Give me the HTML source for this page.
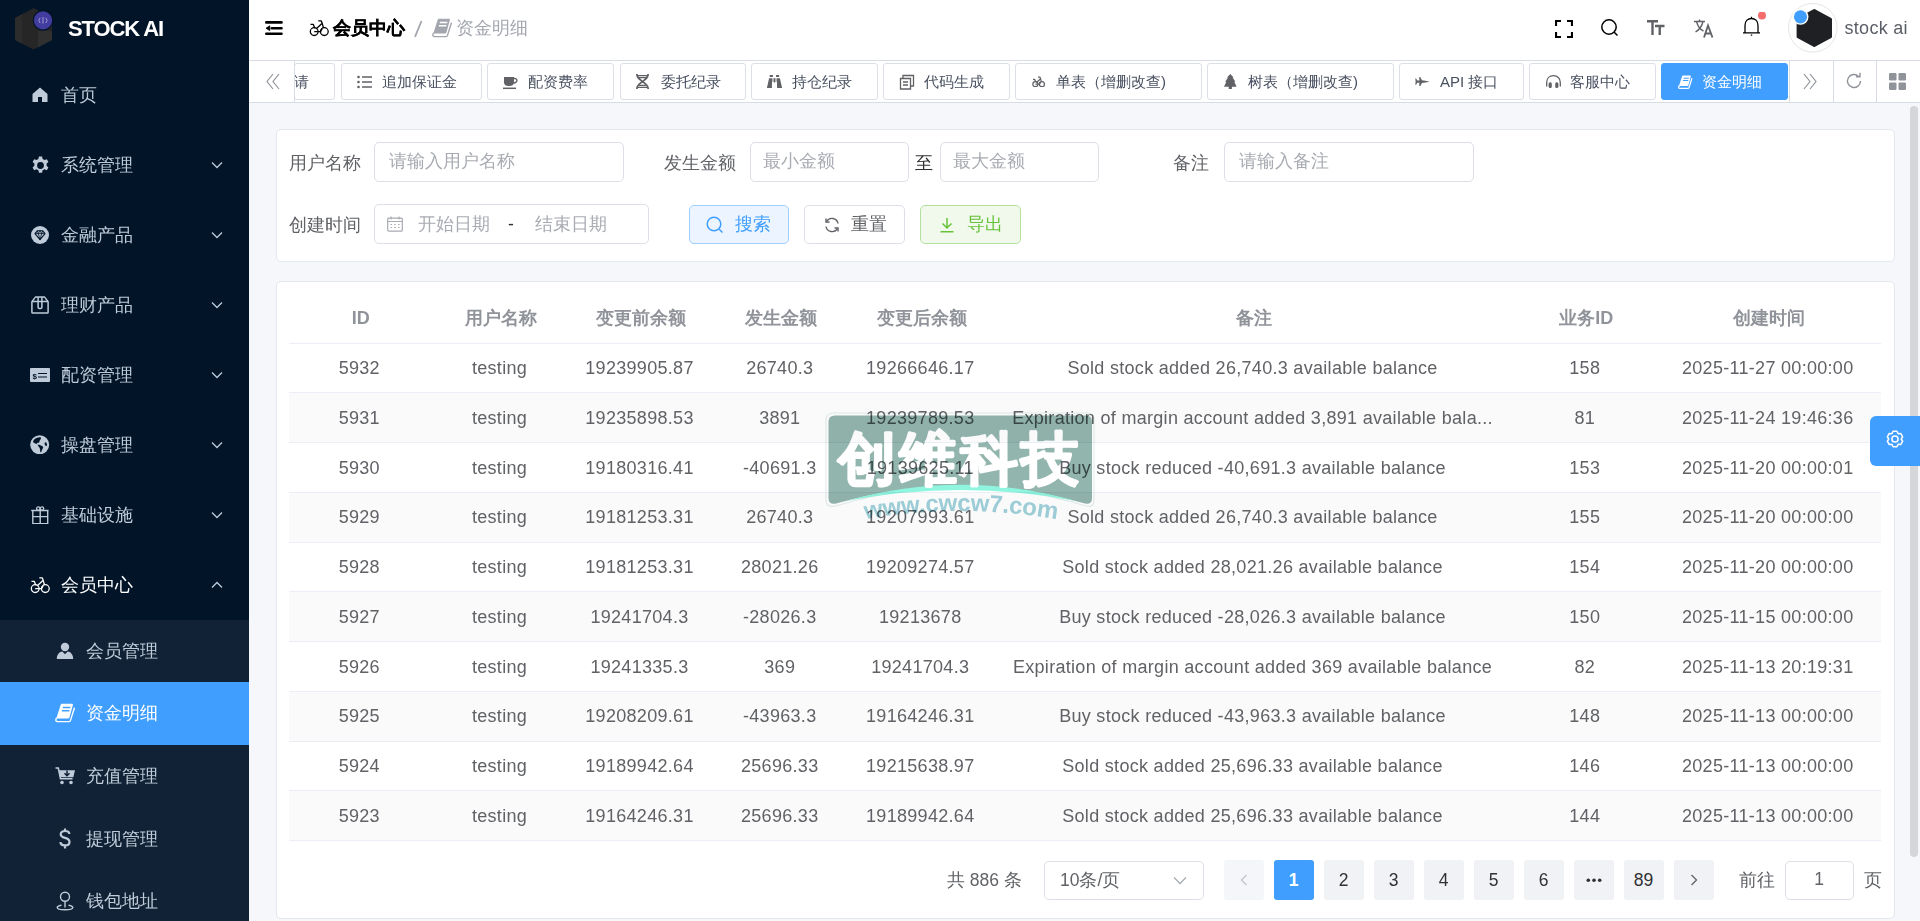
<!DOCTYPE html>
<html><head><meta charset="utf-8">
<style>
*{box-sizing:border-box;margin:0;padding:0}
html,body{width:1920px;height:921px;overflow:hidden;background:#f5f7fa;font-family:"Liberation Sans",sans-serif;font-size:17.5px;color:#606266}
.abs{position:absolute}
#sb{position:absolute;left:0;top:0;width:249px;height:921px;background:#011428;overflow:hidden}
.mi{position:absolute;left:0;width:249px;height:70px;color:#bfcbd9;font-size:17.5px}
.mi .t{position:absolute;left:61px;top:0;line-height:70px;white-space:nowrap}
.mi svg.ic{position:absolute;left:31px;top:26px;width:18px;height:18px}
.mi svg.ch{position:absolute;left:211px;top:31px;width:12px;height:8px}
.si{position:absolute;left:0;width:249px;height:62.5px;color:#bfcbd9}
.si .t{position:absolute;left:86px;top:0;line-height:62.5px;white-space:nowrap}
.si svg.ic{position:absolute;left:56px;top:22px;width:18px;height:18px}
#nav{position:absolute;left:249px;top:0;width:1671px;height:60px;background:#fff}
#tags{position:absolute;left:249px;top:60px;width:1671px;height:43px;background:#fff;border-top:1px solid #d8dce5;border-bottom:1.5px solid #d8dce5}
.tag{position:absolute;top:2px;height:37px;border:1px solid #dcdfe6;border-radius:3px;background:#fff;color:#495060;font-size:15px;line-height:35px;white-space:nowrap}
.tag svg{position:absolute;top:10px;width:16px;height:16px}
.tag .tt{position:absolute;top:0}
.card{position:absolute;background:#fff;border:1px solid #e4e7ed;border-radius:5px}
.lbl{position:absolute;color:#606266;font-size:17.5px;line-height:20px;white-space:nowrap}
.inp{position:absolute;height:39.5px;border:1px solid #dcdfe6;border-radius:5px;background:#fff;color:#a8abb2;font-size:17.5px;line-height:37px;white-space:nowrap}
.btn{position:absolute;top:204.5px;height:39.5px;border:1px solid #dcdfe6;border-radius:5px;font-size:17.5px;line-height:37px;white-space:nowrap}
.th{position:absolute;top:293px;height:50px;line-height:50px;text-align:center;font-weight:bold;color:#909399;white-space:nowrap;font-size:18px}
.row{position:absolute;left:289px;width:1592px;height:49.75px;border-bottom:1px solid #ebeef5}
.row.s{background:#fafafa}
.td{position:absolute;top:0.7px;height:49px;line-height:49px;text-align:center;white-space:nowrap;color:#606266;letter-spacing:0.3px;font-size:18px}
.pg{position:absolute;top:859.5px;width:40px;height:40px;border-radius:3px;background:#f0f2f5;color:#303133;text-align:center;line-height:40px;font-size:17.5px;font-weight:normal}
</style></head><body>

<!-- SIDEBAR -->
<div id="sb">
  <svg class="abs" style="left:14px;top:7px" width="40" height="44" viewBox="0 0 40 44">
    <polygon points="19.5,1 38,11 38,33 19.5,42.5 1,33 1,11" fill="#262626"/>
    <polygon points="1,11 8,7.2 8,36.7 1,33" fill="#2c2c2c"/>
    <polygon points="24,24 38,24 38,33 24,40.5" fill="#303030"/>
    <circle cx="29" cy="13.4" r="10.3" fill="#011428"/>
    <circle cx="29" cy="13.4" r="9.1" fill="#423c9f"/>
    <path d="M26.2 10.8 L24.8 13.4 L26.2 16 M31.8 10.8 L33.2 13.4 L31.8 16 M29 10 V16.6" stroke="#a9a5dc" stroke-width="0.9" fill="none"/>
  </svg>
  <div class="abs" style="left:68px;top:16px;color:#fff;font-weight:bold;font-size:22px;line-height:26px;letter-spacing:-1.1px">STOCK AI</div>

  <div class="mi" style="top:60px"><svg class="ic" viewBox="0 0 18 18"><path d="M9 1.5 L1.5 8 V16 H7 V11 H11 V16 H16.5 V8 Z" fill="#bfcbd9"/></svg><span class="t">首页</span></div>
  <div class="mi" style="top:130px"><svg class="ic" viewBox="0 0 18 18" style="left:30.5px;top:25.5px;width:19px;height:19px"><path d="M7.5 0.5h3l0.5 2.3 1.8 1 2.2-0.8 1.5 2.6-1.7 1.6v2l1.7 1.6-1.5 2.6-2.2-0.8-1.8 1-0.5 2.3h-3l-0.5-2.3-1.8-1-2.2 0.8-1.5-2.6 1.7-1.6v-2l-1.7-1.6 1.5-2.6 2.2 0.8 1.8-1z" fill="#bfcbd9"/><circle cx="9" cy="9" r="3.2" fill="#011428"/></svg><span class="t">系统管理</span><svg class="ch" viewBox="0 0 12 8"><path d="M1 1.5 L6 6.5 L11 1.5" stroke="#bfcbd9" stroke-width="1.3" fill="none"/></svg></div>
  <div class="mi" style="top:200px"><svg class="ic" viewBox="0 0 18 18"><circle cx="9" cy="9" r="9" fill="#bfcbd9"/><path d="M6.3 4.8 H11.7 L14 7.6 L9 13.6 L4 7.6 Z" stroke="#011428" stroke-width="1.1" fill="none" stroke-linejoin="round"/><path d="M4 7.6 H14 M7.3 7.6 L9 13.6 L10.7 7.6 M6.3 4.8 L7.3 7.6 L9 4.8 L10.7 7.6 L11.7 4.8" stroke="#011428" stroke-width="0.8" fill="none"/></svg><span class="t">金融产品</span><svg class="ch" viewBox="0 0 12 8"><path d="M1 1.5 L6 6.5 L11 1.5" stroke="#bfcbd9" stroke-width="1.3" fill="none"/></svg></div>
  <div class="mi" style="top:270px"><svg class="ic" viewBox="0 0 18 18"><path d="M0.9 5.6 L4.6 0.9 H13.4 L17.1 5.6 V16.3 Q17.1 17.1 16.3 17.1 H1.7 Q0.9 17.1 0.9 16.3 Z M0.9 5.6 H17.1" stroke="#bfcbd9" stroke-width="1.5" fill="none" stroke-linejoin="round"/><path d="M7.1 1 V11.2 Q7.1 12.4 8.3 12.4 H9.7 Q10.9 12.4 10.9 11.2 V1" stroke="#bfcbd9" stroke-width="1.5" fill="none"/></svg><span class="t">理财产品</span><svg class="ch" viewBox="0 0 12 8"><path d="M1 1.5 L6 6.5 L11 1.5" stroke="#bfcbd9" stroke-width="1.3" fill="none"/></svg></div>
  <div class="mi" style="top:340px"><svg class="ic" viewBox="0 0 20 18" style="width:20px;left:30px"><rect x="0" y="2" width="20" height="14" rx="1" fill="#bfcbd9"/><text x="2.5" y="12.5" font-size="8" font-weight="bold" fill="#011428" font-family="Liberation Sans">$</text><path d="M8 7.5h9M8 11h9" stroke="#011428" stroke-width="1.2"/></svg><span class="t">配资管理</span><svg class="ch" viewBox="0 0 12 8"><path d="M1 1.5 L6 6.5 L11 1.5" stroke="#bfcbd9" stroke-width="1.3" fill="none"/></svg></div>
  <div class="mi" style="top:410px"><svg style="position:absolute;left:30.3px;top:25px" width="19.4" height="19.4" viewBox="0 0 19.4 19.4"><circle cx="9.7" cy="9.8" r="9.5" fill="#bfcbd9"/><path d="M3 7 C3.5 5 5 3.5 7 2.8 C8.5 2.3 10 2 10.8 2.4 C11.3 3.5 10.6 4.5 9.8 5.3 C9.3 6.5 9.6 7.8 8.5 7.8 C7.5 7.5 6.5 8.2 6.8 9 C5.5 8.8 4.2 8 3 7 Z" fill="#011428"/><path d="M7.6 9.6 C9 10 10.5 10.3 12 11 C13.2 11.5 13.5 12.6 12.8 13.5 C12 14.5 11.8 16 11.2 17.3 C10.6 17.8 10.2 17 10.2 16 C10.3 14.5 9.8 13 9 12 C8.4 11.2 7.8 10.5 7.6 9.6 Z" fill="#011428"/><ellipse cx="15.8" cy="9.2" rx="1.1" ry="1.9" transform="rotate(-20 15.8 9.2)" fill="#011428"/></svg><span class="t">操盘管理</span><svg class="ch" viewBox="0 0 12 8"><path d="M1 1.5 L6 6.5 L11 1.5" stroke="#bfcbd9" stroke-width="1.3" fill="none"/></svg></div>
  <div class="mi" style="top:480px"><svg style="position:absolute;left:31px;top:26px" width="18" height="18" viewBox="0 0 18 18"><path d="M0.2 4.5 H17.6 M1.8 4.5 V17.6 H16.7 V4.5 M9.2 4.5 V17.6 M1.8 10.6 H16.7" stroke="#bfcbd9" stroke-width="1.4" fill="none"/><circle cx="7.3" cy="2.6" r="1.7" stroke="#bfcbd9" stroke-width="1.3" fill="none"/><circle cx="11" cy="2.6" r="1.7" stroke="#bfcbd9" stroke-width="1.3" fill="none"/></svg><span class="t">基础设施</span><svg class="ch" viewBox="0 0 12 8"><path d="M1 1.5 L6 6.5 L11 1.5" stroke="#bfcbd9" stroke-width="1.3" fill="none"/></svg></div>
  <div class="mi" style="top:550px;color:#fff"><svg style="position:absolute;left:30px;top:26px" width="20" height="18" viewBox="0 0 20 18"><circle cx="5.2" cy="12.6" r="3.9" stroke="#fff" stroke-width="1.3" fill="none"/><circle cx="15.3" cy="12.6" r="3.9" stroke="#fff" stroke-width="1.3" fill="none"/><path d="M1.5 5.3 H4.2 L5.8 9.2 M7 10 L13.2 4.3 M9.3 1.9 H12.3 L13.2 4.3 L14.5 9 M5.2 12.6 H11.5 L13.2 9.6" stroke="#fff" stroke-width="1.3" fill="none" stroke-linejoin="round"/></svg><span class="t">会员中心</span><svg class="ch" viewBox="0 0 12 8"><path d="M1 6.5 L6 1.5 L11 6.5" stroke="#bfcbd9" stroke-width="1.3" fill="none"/></svg></div>

  <div class="abs" style="left:0;top:620px;width:249px;height:301px;background:#112236"></div>
  <div class="si" style="top:620px"><svg style="position:absolute;left:56px;top:22px" width="18" height="18" viewBox="0 0 18 18"><circle cx="9" cy="5" r="4.2" fill="#bfcbd9"/><path d="M0.8 17 C0.8 12 4 9.8 6.3 9.6 L9 12.3 L11.7 9.6 C14 9.8 17.2 12 17.2 17 Z" fill="#bfcbd9"/></svg><span class="t">会员管理</span></div>
  <div class="si" style="top:682px;height:63px;background:#409eff;color:#fff"><svg style="position:absolute;left:55px;top:21px" width="21" height="20" viewBox="0 0 21 20"><path d="M7 0.8 H17 Q18.2 0.8 17.9 2 L14.5 14.3 Q14.2 15.5 13 15.5 H1.3 L5.6 2 Q6 0.8 7 0.8 Z" fill="#fff"/><path d="M1.3 15.3 Q0 18.6 2.6 18.6 H14.2 Q15.1 18.6 15.4 17.6 L19.3 5.2" stroke="#fff" stroke-width="1.4" fill="none" stroke-linecap="round"/><path d="M7.8 4.5 H15.3 M6.9 7.7 H14.4" stroke="#409eff" stroke-width="1.5"/></svg><span class="t">资金明细</span></div>
  <div class="si" style="top:745px"><svg style="position:absolute;left:55px;top:22px" width="21" height="18" viewBox="0 0 21 18"><path d="M0.5 1 H3.3 L5.5 11.8 H17.5" stroke="#bfcbd9" stroke-width="1.6" fill="none"/><path d="M4 3.2 H20 L18.3 10.2 H5.4 Z" fill="#bfcbd9"/><circle cx="7" cy="15.5" r="1.8" fill="#bfcbd9"/><circle cx="16" cy="15.5" r="1.8" fill="#bfcbd9"/><path d="M12 3.5 V8.5 M9.5 6.2 L12 8.7 L14.5 6.2" stroke="#112236" stroke-width="1.5" fill="none"/></svg><span class="t">充值管理</span></div>
  <div class="si" style="top:807.5px"><svg style="position:absolute;left:59px;top:20px" width="12" height="21" viewBox="0 0 12 21"><path d="M10.3 6 C10.3 3.8 8.5 3 6 3 C3.3 3 1.7 4.2 1.7 6.2 C1.7 8.5 3.8 9.3 6 9.9 C8.4 10.5 10.5 11.3 10.5 13.9 C10.5 16.3 8.5 17.3 6 17.3 C3.4 17.3 1.5 16.2 1.5 13.9 M6 0.5 V3 M6 17.3 V20.5" stroke="#bfcbd9" stroke-width="2.2" fill="none"/></svg><span class="t">提现管理</span></div>
  <div class="si" style="top:870px"><svg style="position:absolute;left:56px;top:21px" width="18" height="20" viewBox="0 0 18 20"><circle cx="9" cy="5.8" r="4.5" stroke="#bfcbd9" stroke-width="1.4" fill="none"/><path d="M9 10.3 V16.5" stroke="#bfcbd9" stroke-width="1.4"/><path d="M5.5 14.3 C2.5 14.8 1.2 15.7 1.2 16.6 C1.2 18 4.7 18.8 9 18.8 C13.3 18.8 16.8 18 16.8 16.6 C16.8 15.7 15.5 14.8 12.5 14.3" stroke="#bfcbd9" stroke-width="1.4" fill="none"/></svg><span class="t">钱包地址</span></div>
</div>

<!-- NAVBAR -->
<div id="nav">
  <svg class="abs" style="left:16px;top:20px" width="18" height="16" viewBox="0 0 18 16"><path d="M1.3 2.4 H16.5 M6.8 8.2 H16.5 M1.3 13.7 H16.5" stroke="#000" stroke-width="2.6" stroke-linecap="round"/><path d="M4.8 5.8 V10.6 L1 8.2 Z" fill="#000" stroke="#000" stroke-width="0.8" stroke-linejoin="round"/></svg>
  <svg class="abs" style="left:60px;top:19px" width="20" height="18" viewBox="0 0 20 18"><circle cx="5.2" cy="12.6" r="3.9" stroke="#000" stroke-width="1.3" fill="none"/><circle cx="15.3" cy="12.6" r="3.9" stroke="#000" stroke-width="1.3" fill="none"/><path d="M1.5 5.3 H4.2 L5.8 9.2 M7 10 L13.2 4.3 M9.3 1.9 H12.3 L13.2 4.3 L14.5 9 M5.2 12.6 H11.5 L13.2 9.6" stroke="#000" stroke-width="1.3" fill="none" stroke-linejoin="round"/></svg>
  <div class="abs" style="left:83.5px;top:18px;font-weight:bold;color:#000;font-size:17.5px;line-height:20px;-webkit-text-stroke:0.25px #000">会员中心</div>
  <svg class="abs" style="left:163px;top:20px" width="12" height="18" viewBox="0 0 12 18"><path d="M9.5 1 L3 16.8" stroke="#a3a6ae" stroke-width="1.8"/></svg>
  <svg class="abs" style="left:183px;top:18px" width="21" height="20" viewBox="0 0 21 20"><path d="M7 0.8 H17 Q18.2 0.8 17.9 2 L14.5 14.3 Q14.2 15.5 13 15.5 H1.3 L5.6 2 Q6 0.8 7 0.8 Z" fill="#a3a6ae"/><path d="M1.3 15.3 Q0 18.6 2.6 18.6 H14.2 Q15.1 18.6 15.4 17.6 L19.3 5.2" stroke="#a3a6ae" stroke-width="1.4" fill="none" stroke-linecap="round"/><path d="M7.8 4.5 H15.3 M6.9 7.7 H14.4" stroke="#fff" stroke-width="1.5"/></svg>
  <div class="abs" style="left:207px;top:18px;color:#a3a6ae;font-size:17.5px;line-height:20px">资金明细</div>

  <svg class="abs" style="left:1306px;top:19.5px" width="18" height="18" viewBox="0 0 18 18"><path d="M1 6 V1 H6 M12 1 H17 V6 M17 12 V17 H12 M6 17 H1 V12" stroke="#000" stroke-width="2.2" fill="none"/></svg>
  <svg class="abs" style="left:1352px;top:19px" width="18" height="18" viewBox="0 0 18 18"><circle cx="8" cy="8" r="7.2" stroke="#000" stroke-width="1.5" fill="none"/><path d="M13 13 L16.5 16.5" stroke="#000" stroke-width="1.5"/></svg>
  <svg class="abs" style="left:1398px;top:20px" width="18" height="16" viewBox="0 0 18 16"><path d="M0 1.3 H11 M5.5 1.3 V15 M8 6 H17.5 M12.75 6 V15" stroke="#606266" stroke-width="2.4" fill="none"/></svg>
  <svg class="abs" style="left:1445px;top:18.5px" width="20" height="19" viewBox="0 0 20 19"><path d="M0 2.5 H11 M5.5 0.5 V2.5 M2.5 2.5 C4 8 7 11 9.5 12 M9 2.5 C8 7 5 11 1.5 13" stroke="#606266" stroke-width="1.4" fill="none"/><path d="M10 18.5 L14 6.5 L18.5 18.5 M11.5 14.5 H17" stroke="#606266" stroke-width="1.8" fill="none"/></svg>
  <svg class="abs" style="left:1492px;top:12px" width="30" height="26" viewBox="0 0 30 26"><path d="M2 20.8 H19 M4 20.8 V13.5 C4 9 7 6.5 10.5 6.5 C14 6.5 17 9 17 13.5 V20.8 M10.5 4.8 V6.5 M9.8 23.2 H11.2" stroke="#000" stroke-width="1.3" fill="none"/><circle cx="21" cy="3.5" r="4" fill="#f56c6c"/></svg>

  <svg class="abs" style="left:1538px;top:2px" width="52" height="52" viewBox="0 0 52 52"><circle cx="25.8" cy="25.8" r="24.3" fill="#fff" stroke="#e4e6eb" stroke-width="1"/><polygon points="27.30,8.50 43.50,17.25 43.50,34.75 27.30,43.50 11.10,34.75 11.10,17.25" fill="#1f2023" stroke="#1f2023" stroke-width="3" stroke-linejoin="round"/><circle cx="13.5" cy="14.8" r="8" fill="#fff"/><circle cx="13.5" cy="14.8" r="6.6" fill="#409eff"/></svg>
  <div class="abs" style="left:1595.5px;top:17px;color:#5a5e66;font-size:18px;line-height:22px;letter-spacing:0.3px">stock ai</div>
</div>
<!-- TAGS -->
<div id="tags">
<svg class="abs" style="left:15.5px;top:12px" width="16" height="17" viewBox="0 0 16 17"><path d="M8 1 L2 8.5 L8 16 M14 1 L8 8.5 L14 16" stroke="#909399" stroke-width="1.2" fill="none"/></svg>
<div class="abs" style="left:45px;top:0;width:1px;height:41px;background:#d8dce5"></div>
<div class="abs" style="left:45.5px;top:0;width:1493px;height:41px;overflow:hidden">
<div class="tag" style="left:-0.5px;width:41px"><span class="tt" style="left:-1px">请</span></div>
<div class="tag" style="left:46.0px;width:141.0px"><svg style="left:15px" viewBox="0 0 16 16"><path d="M5 3H15M5 8H15M5 13H15" stroke="#606266" stroke-width="1.6"/><circle cx="1.5" cy="3" r="1.3" fill="#606266"/><circle cx="1.5" cy="8" r="1.3" fill="#606266"/><circle cx="1.5" cy="13" r="1.3" fill="#606266"/></svg><span class="tt" style="left:40px">追加保证金</span></div>
<div class="tag" style="left:192.5px;width:127px"><svg style="left:15px" viewBox="0 0 16 16"><path d="M1 3 H11 V8 C11 11 9 12 6 12 C3 12 1 11 1 8 Z" fill="#606266"/><path d="M11 4.5 C15 4 15 9 10.5 9" stroke="#606266" stroke-width="1.4" fill="none"/><path d="M0 14.3 H13" stroke="#606266" stroke-width="1.5"/></svg><span class="tt" style="left:40px">配资费率</span></div>
<div class="tag" style="left:325.0px;width:126.0px"><svg style="left:15.5px;top:10px;width:13px;height:15px" viewBox="0 0 13 15"><path d="M0.9 0.6 C1.5 5 5 6 6.5 7.5 C8 9 11.5 10 12.1 14.4 M12.1 0.6 C11.5 5 8 6 6.5 7.5 C5 9 1.5 10 0.9 14.4" stroke="#606266" stroke-width="1.8" fill="none" stroke-linecap="round"/><path d="M1 1.6 H12 M1 13.4 H12 M3 3.7 H10 M3 11.3 H10" stroke="#606266" stroke-width="1.3"/></svg><span class="tt" style="left:40px">委托纪录</span></div>
<div class="tag" style="left:456.5px;width:126.5px"><svg style="left:15px;top:10.7px;width:15px;height:13.3px" viewBox="0 0 15 13.3"><path d="M2.7 0 H5.9 V2 H2.7 Z M9.1 0 H12.1 V2 H9.1 Z" fill="#606266"/><path d="M2.1 3.3 H5.1 L4.9 13.3 H0.4 Q0 13.3 0 12.6 Z M9.9 3.3 H12.9 L15 12.6 Q15 13.3 14.6 13.3 H10.1 Z" fill="#606266"/><path d="M5.1 3.3 H9.9 V7 H5.1 Z" fill="#606266" opacity="0.45"/><path d="M6.9 3.3 H8.1 V7.5 H6.9 Z" fill="#606266"/></svg><span class="tt" style="left:40px">持仓纪录</span></div>
<div class="tag" style="left:588.5px;width:126.5px"><svg style="left:15px" viewBox="0 0 16 16"><path d="M4 4.5 V1.5 H14.5 V12 H11.5 M1.5 4.5 H11.5 V15 H1.5 Z M4 8 H9 M4 11 H9" stroke="#606266" stroke-width="1.3" fill="none"/></svg><span class="tt" style="left:40px">代码生成</span></div>
<div class="tag" style="left:720.5px;width:186.5px"><svg style="left:16px;top:11.5px;width:13px;height:11.7px" viewBox="0 0 20 18"><circle cx="5.2" cy="12.6" r="3.9" stroke="#606266" stroke-width="1.9" fill="none"/><circle cx="15.3" cy="12.6" r="3.9" stroke="#606266" stroke-width="1.9" fill="none"/><path d="M1.5 5.3 H4.2 L5.8 9.2 M7 10 L13.2 4.3 M9.3 1.9 H12.3 L13.2 4.3 L14.5 9 M5.2 12.6 H11.5 L13.2 9.6" stroke="#606266" stroke-width="1.9" fill="none" stroke-linejoin="round"/></svg><span class="tt" style="left:40px">单表（增删改查)</span></div>
<div class="tag" style="left:912.5px;width:186.5px"><svg style="left:16.3px;top:9.8px;width:12.6px;height:15px" viewBox="0 0 12.6 15"><polygon points="6.3,0 9.6,3.5 8.6,3.5 11.4,7.8 10.3,7.8 12.6,12.7 7.9,12.7 7.9,15 4.7,15 4.7,12.7 0,12.7 2.3,7.8 1.2,7.8 4,3.5 3,3.5" fill="#606266"/></svg><span class="tt" style="left:40px">树表（增删改查)</span></div>
<div class="tag" style="left:1104.5px;width:124.5px"><svg style="left:15px;top:13.2px;width:14.7px;height:9.3px" viewBox="0 0 14.7 9.3"><path d="M14.7 4.65 Q10 3.8 7 3.3 L5.2 0 H4.2 L4.4 3.5 H2.3 L1.1 1.6 H0.3 L0.6 4.65 L0.3 7.7 H1.1 L2.3 5.8 H4.4 L4.2 9.3 H5.2 L7 6 Q10 5.5 14.7 4.65 Z" fill="#606266"/></svg><span class="tt" style="left:40px">API 接口</span></div>
<div class="tag" style="left:1234.5px;width:126.5px"><svg style="left:16px;top:11px;width:15px;height:13px" viewBox="0 0 15 13"><path d="M0.7 11 V7.5 C0.7 3.2 3.7 0.7 7.5 0.7 C11.3 0.7 14.3 3.2 14.3 7.5 V11" stroke="#606266" stroke-width="1.3" fill="none" stroke-linecap="round"/><rect x="2.6" y="7.2" width="3.2" height="5.7" rx="1.5" fill="#606266"/><rect x="9.2" y="7.2" width="3.2" height="5.7" rx="1.5" fill="#606266"/></svg><span class="tt" style="left:40px">客服中心</span></div>
<div class="tag" style="left:1366.5px;width:127px;background:#409eff;border-color:#409eff;color:#fff"><svg style="left:16px;top:10.5px;width:15px;height:14.3px" viewBox="0 0 21 20"><path d="M7 0.8 H17 Q18.2 0.8 17.9 2 L14.5 14.3 Q14.2 15.5 13 15.5 H1.3 L5.6 2 Q6 0.8 7 0.8 Z" fill="#fff"/><path d="M1.3 15.3 Q0 18.6 2.6 18.6 H14.2 Q15.1 18.6 15.4 17.6 L19.3 5.2" stroke="#fff" stroke-width="1.8" fill="none" stroke-linecap="round"/><path d="M7.8 4.5 H15.3 M6.9 7.7 H14.4" stroke="#409eff" stroke-width="1.5"/></svg><span class="tt" style="left:40px">资金明细</span></div>
</div>
<div class="abs" style="left:1540px;top:0;width:1px;height:41px;background:#d8dce5"></div>
<svg class="abs" style="left:1553px;top:12px" width="16" height="17" viewBox="0 0 16 17"><path d="M2 1 L8 8.5 L2 16 M8 1 L14 8.5 L8 16" stroke="#909399" stroke-width="1.2" fill="none"/></svg>
<div class="abs" style="left:1584px;top:0;width:1px;height:41px;background:#d8dce5"></div>
<svg class="abs" style="left:1596px;top:11px" width="18" height="18" viewBox="0 0 18 18"><path d="M15.5 9 A6.5 6.5 0 1 1 13.6 4.4" stroke="#909399" stroke-width="1.4" fill="none"/><path d="M11 4.8 L15 4.8 L15 0.8" stroke="#909399" stroke-width="1.4" fill="none"/></svg>
<div class="abs" style="left:1627px;top:0;width:1px;height:41px;background:#d8dce5"></div>
<svg class="abs" style="left:1640px;top:12px" width="17" height="17" viewBox="0 0 17 17"><rect x="0" y="0" width="7.5" height="7.5" rx="1.2" fill="#909399"/><rect x="9.5" y="0" width="7.5" height="7.5" rx="1.2" fill="#909399"/><rect x="0" y="9.5" width="7.5" height="7.5" rx="1.2" fill="#909399"/><rect x="9.5" y="9.5" width="7.5" height="7.5" rx="1.2" fill="#909399"/></svg>
</div>

<!-- CONTENT -->
<div class="card" style="left:275.5px;top:128.5px;width:1619px;height:133px"></div>
<div class="card" style="left:275.5px;top:281px;width:1619px;height:638px"></div>


<div class="lbl" style="left:288.5px;top:153px">用户名称</div>
<div class="inp" style="left:374px;top:142px;width:249.5px"><span style="position:absolute;left:13.5px">请输入用户名称</span></div>
<div class="lbl" style="left:663.5px;top:153px">发生金额</div>
<div class="inp" style="left:749.5px;top:142px;width:159px"><span style="position:absolute;left:12.5px">最小金额</span></div>
<div class="lbl" style="left:915px;top:153px;color:#303133">至</div>
<div class="inp" style="left:939.5px;top:142px;width:159px"><span style="position:absolute;left:12.5px">最大金额</span></div>
<div class="lbl" style="left:1173px;top:153px">备注</div>
<div class="inp" style="left:1224px;top:142px;width:249.5px"><span style="position:absolute;left:13.5px">请输入备注</span></div>

<div class="lbl" style="left:288.5px;top:215px">创建时间</div>
<div class="inp" style="left:374px;top:204px;width:274.5px">
  <svg style="position:absolute;left:12px;top:11px" width="16" height="16" viewBox="0 0 16 16"><rect x="0.7" y="2.2" width="14.6" height="13" rx="1" stroke="#a8abb2" stroke-width="1.2" fill="none"/><path d="M0.7 5.5 H15.3 M4 0.5 V3.5 M12 0.5 V3.5" stroke="#a8abb2" stroke-width="1.2"/><path d="M3.5 8.5H5M7.2 8.5H8.7M11 8.5H12.5M3.5 11.5H5M7.2 11.5H8.7M11 11.5H12.5" stroke="#a8abb2" stroke-width="1"/></svg>
  <span style="position:absolute;left:42.5px;top:1px">开始日期</span>
  <span style="position:absolute;left:133px;top:1px;color:#303133">-</span>
  <span style="position:absolute;left:159.5px;top:1px">结束日期</span>
</div>
<div class="btn" style="left:689px;width:100px;background:#ecf5ff;border-color:#a0cfff;color:#409eff">
  <svg style="position:absolute;left:16px;top:10.5px" width="18" height="18" viewBox="0 0 18 18"><circle cx="8" cy="8" r="6.8" stroke="#409eff" stroke-width="1.5" fill="none"/><path d="M13 13 L16.5 16.5" stroke="#409eff" stroke-width="1.5"/></svg>
  <span style="position:absolute;left:45px">搜索</span>
</div>
<div class="btn" style="left:804px;width:100.5px;background:#fff;border-color:#dcdfe6;color:#606266">
  <svg style="position:absolute;left:18.5px;top:11.5px" width="16" height="16" viewBox="0 0 16 16"><path d="M14 6.5 A6.2 6.2 0 0 0 2.5 4.5 M2 9.5 A6.2 6.2 0 0 0 13.5 11.5" stroke="#606266" stroke-width="1.4" fill="none"/><path d="M2 1.5 V5 H5.5 M14 14.5 V11 H10.5" stroke="#606266" stroke-width="1.4" fill="none"/></svg>
  <span style="position:absolute;left:45.5px">重置</span>
</div>
<div class="btn" style="left:920px;width:100.5px;background:#f0f9eb;border-color:#b3e19d;color:#67c23a">
  <svg style="position:absolute;left:18px;top:11.5px" width="16" height="16" viewBox="0 0 16 16"><path d="M8 1 V11 M3.5 6.5 L8 11 L12.5 6.5 M1.5 14.8 H14.5" stroke="#67c23a" stroke-width="1.5" fill="none"/></svg>
  <span style="position:absolute;left:45.5px">导出</span>
</div>
<div class="abs" style="left:289px;top:342.5px;width:1592px;height:1px;background:#ebeef5"></div>
<div class="th" style="left:290.5px;width:140.5px">ID</div>
<div class="th" style="left:431.0px;width:140.0px">用户名称</div>
<div class="th" style="left:571.0px;width:140.0px">变更前余额</div>
<div class="th" style="left:711.0px;width:140.5px">发生金额</div>
<div class="th" style="left:851.5px;width:140.5px">变更后余额</div>
<div class="th" style="left:992.0px;width:524.0px">备注</div>
<div class="th" style="left:1516.0px;width:140.5px">业务ID</div>
<div class="th" style="left:1656.5px;width:225.5px">创建时间</div>
<div class="row" style="top:343.5px"><div class="td" style="left:0.0px;width:140.5px">5932</div><div class="td" style="left:140.5px;width:140.0px">testing</div><div class="td" style="left:280.5px;width:140.0px">19239905.87</div><div class="td" style="left:420.5px;width:140.5px">26740.3</div><div class="td" style="left:561.0px;width:140.5px">19266646.17</div><div class="td" style="left:701.5px;width:524.0px">Sold stock added 26,740.3 available balance</div><div class="td" style="left:1225.5px;width:140.5px">158</div><div class="td" style="left:1366.0px;width:225.5px">2025-11-27 00:00:00</div></div>
<div class="row s" style="top:393.25px"><div class="td" style="left:0.0px;width:140.5px">5931</div><div class="td" style="left:140.5px;width:140.0px">testing</div><div class="td" style="left:280.5px;width:140.0px">19235898.53</div><div class="td" style="left:420.5px;width:140.5px">3891</div><div class="td" style="left:561.0px;width:140.5px">19239789.53</div><div class="td" style="left:701.5px;width:524.0px">Expiration of margin account added 3,891 available bala...</div><div class="td" style="left:1225.5px;width:140.5px">81</div><div class="td" style="left:1366.0px;width:225.5px">2025-11-24 19:46:36</div></div>
<div class="row" style="top:443.0px"><div class="td" style="left:0.0px;width:140.5px">5930</div><div class="td" style="left:140.5px;width:140.0px">testing</div><div class="td" style="left:280.5px;width:140.0px">19180316.41</div><div class="td" style="left:420.5px;width:140.5px">-40691.3</div><div class="td" style="left:561.0px;width:140.5px">19139625.11</div><div class="td" style="left:701.5px;width:524.0px">Buy stock reduced -40,691.3 available balance</div><div class="td" style="left:1225.5px;width:140.5px">153</div><div class="td" style="left:1366.0px;width:225.5px">2025-11-20 00:00:01</div></div>
<div class="row s" style="top:492.75px"><div class="td" style="left:0.0px;width:140.5px">5929</div><div class="td" style="left:140.5px;width:140.0px">testing</div><div class="td" style="left:280.5px;width:140.0px">19181253.31</div><div class="td" style="left:420.5px;width:140.5px">26740.3</div><div class="td" style="left:561.0px;width:140.5px">19207993.61</div><div class="td" style="left:701.5px;width:524.0px">Sold stock added 26,740.3 available balance</div><div class="td" style="left:1225.5px;width:140.5px">155</div><div class="td" style="left:1366.0px;width:225.5px">2025-11-20 00:00:00</div></div>
<div class="row" style="top:542.5px"><div class="td" style="left:0.0px;width:140.5px">5928</div><div class="td" style="left:140.5px;width:140.0px">testing</div><div class="td" style="left:280.5px;width:140.0px">19181253.31</div><div class="td" style="left:420.5px;width:140.5px">28021.26</div><div class="td" style="left:561.0px;width:140.5px">19209274.57</div><div class="td" style="left:701.5px;width:524.0px">Sold stock added 28,021.26 available balance</div><div class="td" style="left:1225.5px;width:140.5px">154</div><div class="td" style="left:1366.0px;width:225.5px">2025-11-20 00:00:00</div></div>
<div class="row s" style="top:592.25px"><div class="td" style="left:0.0px;width:140.5px">5927</div><div class="td" style="left:140.5px;width:140.0px">testing</div><div class="td" style="left:280.5px;width:140.0px">19241704.3</div><div class="td" style="left:420.5px;width:140.5px">-28026.3</div><div class="td" style="left:561.0px;width:140.5px">19213678</div><div class="td" style="left:701.5px;width:524.0px">Buy stock reduced -28,026.3 available balance</div><div class="td" style="left:1225.5px;width:140.5px">150</div><div class="td" style="left:1366.0px;width:225.5px">2025-11-15 00:00:00</div></div>
<div class="row" style="top:642.0px"><div class="td" style="left:0.0px;width:140.5px">5926</div><div class="td" style="left:140.5px;width:140.0px">testing</div><div class="td" style="left:280.5px;width:140.0px">19241335.3</div><div class="td" style="left:420.5px;width:140.5px">369</div><div class="td" style="left:561.0px;width:140.5px">19241704.3</div><div class="td" style="left:701.5px;width:524.0px">Expiration of margin account added 369 available balance</div><div class="td" style="left:1225.5px;width:140.5px">82</div><div class="td" style="left:1366.0px;width:225.5px">2025-11-13 20:19:31</div></div>
<div class="row s" style="top:691.75px"><div class="td" style="left:0.0px;width:140.5px">5925</div><div class="td" style="left:140.5px;width:140.0px">testing</div><div class="td" style="left:280.5px;width:140.0px">19208209.61</div><div class="td" style="left:420.5px;width:140.5px">-43963.3</div><div class="td" style="left:561.0px;width:140.5px">19164246.31</div><div class="td" style="left:701.5px;width:524.0px">Buy stock reduced -43,963.3 available balance</div><div class="td" style="left:1225.5px;width:140.5px">148</div><div class="td" style="left:1366.0px;width:225.5px">2025-11-13 00:00:00</div></div>
<div class="row" style="top:741.5px"><div class="td" style="left:0.0px;width:140.5px">5924</div><div class="td" style="left:140.5px;width:140.0px">testing</div><div class="td" style="left:280.5px;width:140.0px">19189942.64</div><div class="td" style="left:420.5px;width:140.5px">25696.33</div><div class="td" style="left:561.0px;width:140.5px">19215638.97</div><div class="td" style="left:701.5px;width:524.0px">Sold stock added 25,696.33 available balance</div><div class="td" style="left:1225.5px;width:140.5px">146</div><div class="td" style="left:1366.0px;width:225.5px">2025-11-13 00:00:00</div></div>
<div class="row s" style="top:791.25px"><div class="td" style="left:0.0px;width:140.5px">5923</div><div class="td" style="left:140.5px;width:140.0px">testing</div><div class="td" style="left:280.5px;width:140.0px">19164246.31</div><div class="td" style="left:420.5px;width:140.5px">25696.33</div><div class="td" style="left:561.0px;width:140.5px">19189942.64</div><div class="td" style="left:701.5px;width:524.0px">Sold stock added 25,696.33 available balance</div><div class="td" style="left:1225.5px;width:140.5px">144</div><div class="td" style="left:1366.0px;width:225.5px">2025-11-13 00:00:00</div></div>
<svg class="abs" style="left:820px;top:405px;mix-blend-mode:multiply" width="285" height="125" viewBox="820 405 285 125">
  <defs><path id="arc" d="M850 522 Q961 500 1072 522"/></defs>
  <path d="M834 413 H1087 Q1094 413 1094 420 V500 Q1094 508 1086 506 Q961 468 836 506 Q826 508 826 500 V420 Q826 413 834 413 Z" fill="none" stroke="#e3eeec" stroke-width="1.2"/>
  <path d="M835 415.5 H1086 Q1092 415.5 1092 421.5 V498 Q1092 505 1085 503.5 Q961 468.5 836 503.5 Q828.5 505 828.5 498 V421.5 Q828.5 415.5 835 415.5 Z" fill="#92b5ad"/>
  <path d="M846 501 Q961 468.5 1076 501 Q961 479 846 501 Z" fill="#8ff5de"/>
  <text x="960" y="479" text-anchor="middle" font-family="Liberation Sans" font-weight="900" font-size="58" fill="#fff" stroke="#fff" stroke-width="2.2" stroke-linejoin="round" letter-spacing="3">创维科技</text>
  <text font-family="Liberation Sans" font-size="24" font-weight="bold" fill="#9fd0da" letter-spacing="-0.2"><textPath href="#arc" startOffset="50%" text-anchor="middle">www.cwcw7.com</textPath></text>
</svg>
<div class="abs" style="left:947px;top:870px;line-height:20px;color:#606266">共 886 条</div>
<div class="inp" style="left:1044px;top:860.5px;width:160px;color:#606266"><span style="position:absolute;left:15px">10条/页</span>
<svg style="position:absolute;left:128px;top:14px" width="14" height="9" viewBox="0 0 14 9"><path d="M1 1.5 L7 7.5 L13 1.5" stroke="#a8abb2" stroke-width="1.3" fill="none"/></svg></div>
<div class="pg" style="left:1223.5px;background:#f5f6f9"><svg style="position:absolute;left:16px;top:14px" width="8" height="12" viewBox="0 0 8 12"><path d="M6.5 1 L1.5 6 L6.5 11" stroke="#c0c4cc" stroke-width="1.3" fill="none"/></svg></div>
<div class="pg" style="left:1273.5px;background:#409eff;color:#fff;font-weight:bold">1</div>
<div class="pg" style="left:1323.5px">2</div>
<div class="pg" style="left:1373.5px">3</div>
<div class="pg" style="left:1423.5px">4</div>
<div class="pg" style="left:1473.5px">5</div>
<div class="pg" style="left:1523.5px">6</div>
<div class="pg" style="left:1573.5px"><svg style="position:absolute;left:0;top:0" width="40" height="40" viewBox="0 0 40 40"><circle cx="14.3" cy="20.2" r="1.8" fill="#303133"/><circle cx="20" cy="20.2" r="1.8" fill="#303133"/><circle cx="25.7" cy="20.2" r="1.8" fill="#303133"/></svg></div>
<div class="pg" style="left:1623.5px">89</div>
<div class="pg" style="left:1673.5px"><svg style="position:absolute;left:16px;top:14px" width="8" height="12" viewBox="0 0 8 12"><path d="M1.5 1 L6.5 6 L1.5 11" stroke="#606266" stroke-width="1.3" fill="none"/></svg></div>
<div class="abs" style="left:1739px;top:870px;line-height:20px;color:#606266">前往</div>
<div class="inp" style="left:1784.5px;top:860.5px;width:69px;color:#606266;text-align:center;line-height:34px">1</div>
<div class="abs" style="left:1864px;top:870px;line-height:20px;color:#606266">页</div>

<div class="abs" style="left:1909.5px;top:106px;width:8.5px;height:751px;border-radius:5px;background:#d5d6da"></div>
<div class="abs" style="left:1870px;top:416px;width:60px;height:50px;border-radius:6px;background:#409eff"><svg style="position:absolute;left:0;top:0" width="50" height="50" viewBox="0 0 50 50"><polygon points="23.06,15.24 26.94,15.24 28.10,17.63 30.75,17.44 32.69,20.79 31.20,23.00 32.69,25.21 30.75,28.56 28.10,28.37 26.94,30.76 23.06,30.76 21.90,28.37 19.25,28.56 17.31,25.21 18.80,23.00 17.31,20.79 19.25,17.44 21.90,17.63" stroke="#fff" stroke-width="1.5" fill="none" stroke-linejoin="round"/><circle cx="25" cy="23" r="3.1" stroke="#fff" stroke-width="1.5" fill="none"/></svg></div>
</body></html>
